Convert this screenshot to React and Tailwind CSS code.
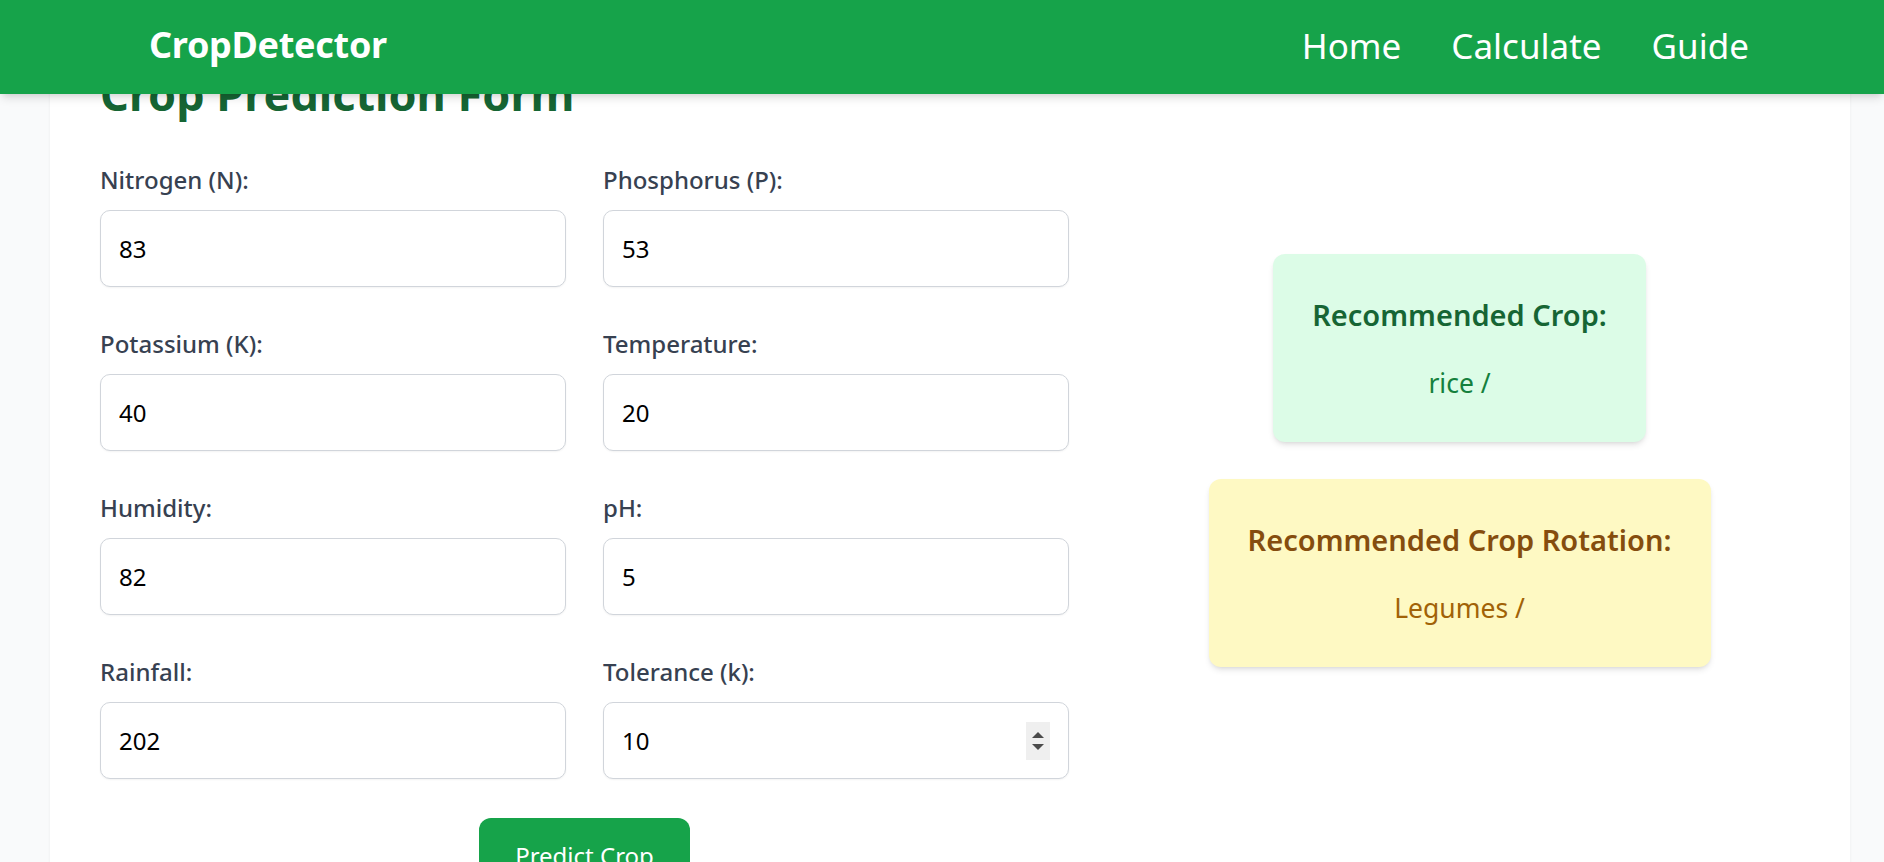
export default function App() {
  const fields = [
    ["Nitrogen (N):", "83"],
    ["Phosphorus (P):", "53"],
    ["Potassium (K):", "40"],
    ["Temperature:", "20"],
    ["Humidity:", "82"],
    ["pH:", "5"],
    ["Rainfall:", "202"],
    ["Tolerance (k):", "10", true],
  ];
  return (
    <div
      className="min-h-screen overflow-hidden bg-[#f9fafb]"
      style={{ fontFamily: '"Noto Sans", "Open Sans", sans-serif' }}
    >
      <nav className="relative z-10 flex h-[94px] items-center justify-between bg-[#16a34a] pb-[4px] pl-[149px] pr-[135px] shadow-[0_6px_9px_-2px_rgba(0,0,0,0.12),0_3px_6px_-3px_rgba(0,0,0,0.1)]">
        <span className="text-[36px] font-bold leading-none tracking-[-0.3px] text-white">CropDetector</span>
        <div className="flex items-center gap-[50px] text-[35px] leading-none text-white">
          <a>Home</a>
          <a>Calculate</a>
          <a>Guide</a>
        </div>
      </nav>
      <main className="-mt-[60px] ml-[50px] mr-[34px]">
        <div className="flex gap-[50px] bg-white pb-[60px] pl-[50px] pr-[50px] pt-[33px] shadow-[0_1px_3px_rgba(0,0,0,0.06)]">
          <div className="w-[969px] shrink-0">
            <h1 className="mb-[37px] text-[45px] font-bold leading-[54px] text-[#166534]">
              Crop Prediction Form
            </h1>
            <div className="grid grid-cols-2 gap-x-[37px] gap-y-[35px]">
              {fields.map(([label, value, spin]) => (
                <div key={label}>
                  <div className="mb-[10px] h-[42px] pt-[1px] text-[24px] font-medium leading-[42px] text-[#374151]">
                    {label}
                  </div>
                  <div className="relative">
                    <input
                      type="text"
                      readOnly
                      value={value}
                      className="block h-[77px] w-full rounded-[10px] border border-[#d1d5db] bg-white px-[18px] text-[24px] text-black shadow-[0_1px_2px_rgba(0,0,0,0.05)] outline-none"
                    />
                    {spin && (
                      <div className="absolute right-[19px] top-1/2 flex h-[38px] w-[24px] -translate-y-1/2 flex-col items-center justify-center gap-[6px] bg-[#efefef]">
                        <div className="h-0 w-0 border-b-[6px] border-l-[6px] border-r-[6px] border-b-[#4b4b4b] border-l-transparent border-r-transparent" />
                        <div className="h-0 w-0 border-l-[6px] border-r-[6px] border-t-[6px] border-l-transparent border-r-transparent border-t-[#4b4b4b]" />
                      </div>
                    )}
                  </div>
                </div>
              ))}
            </div>
            <div className="mt-[39px] flex justify-center">
              <button className="rounded-[12px] bg-[#16a34a] px-[36px] py-[20px] text-[24px] leading-[36px] text-white">
                Predict Crop
              </button>
            </div>
          </div>
          <div className="flex flex-1 flex-col items-center gap-[37px] pt-[187px]">
            <div className="flex h-[188px] w-[373px] flex-col items-center rounded-[12px] bg-[#dcfce7] pt-[40px] shadow-[0_4px_6px_-1px_rgba(0,0,0,0.1),0_2px_4px_-2px_rgba(0,0,0,0.1)]">
              <h2 className="text-[29px] font-semibold leading-[42px] text-[#166534]">Recommended Crop:</h2>
              <p className="mt-[26px] text-[26.5px] leading-[42px] text-[#15803d]">rice /</p>
            </div>
            <div className="flex h-[188px] w-[502px] flex-col items-center rounded-[12px] bg-[#fef9c3] pt-[40px] shadow-[0_4px_6px_-1px_rgba(0,0,0,0.1),0_2px_4px_-2px_rgba(0,0,0,0.1)]">
              <h2 className="text-[29px] font-semibold leading-[42px] text-[#854d0e]">Recommended Crop Rotation:</h2>
              <p className="mt-[26px] text-[26.5px] leading-[42px] text-[#a16207]">Legumes /</p>
            </div>
          </div>
        </div>
      </main>
    </div>
  );
}
